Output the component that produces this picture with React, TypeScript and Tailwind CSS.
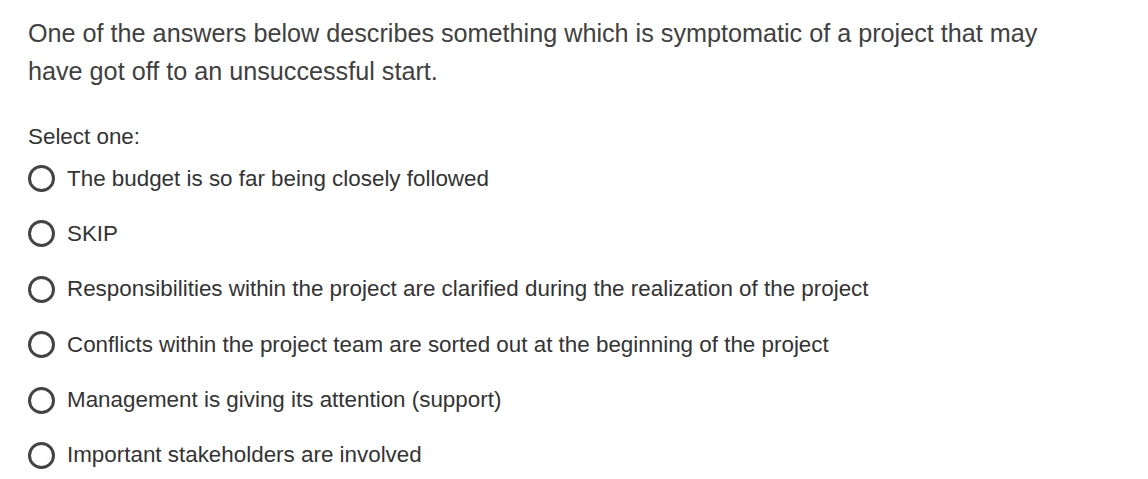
const options = [
  'The budget is so far being closely followed',
  'SKIP',
  'Responsibilities within the project are clarified during the realization of the project',
  'Conflicts within the project team are sorted out at the beginning of the project',
  'Management is giving its attention (support)',
  'Important stakeholders are involved',
]

export default function App() {
  return (
    <div className="min-h-[479px] bg-white pl-[28px] pt-[14px] text-[#404040] font-['Liberation_Sans',Arial,sans-serif]">
      <p className="max-w-[1040px] text-[25.2px] leading-[38px]">
        One of the answers below describes something which is symptomatic of a project that may have got off to an unsuccessful start.
      </p>
      <div className="mt-[33px] text-[22.4px] leading-[28px] text-[#333]">Select one:</div>
      <div className="mt-[13.5px] flex flex-col gap-[27.4px]">
        {options.map((o) => (
          <label key={o} className="flex items-center gap-[12px] text-[22.4px] leading-[28px] text-[#333]">
            <span className="h-[27px] w-[27px] shrink-0 rounded-full border-[3px] border-[#444]" />
            <span>{o}</span>
          </label>
        ))}
      </div>
    </div>
  )
}
